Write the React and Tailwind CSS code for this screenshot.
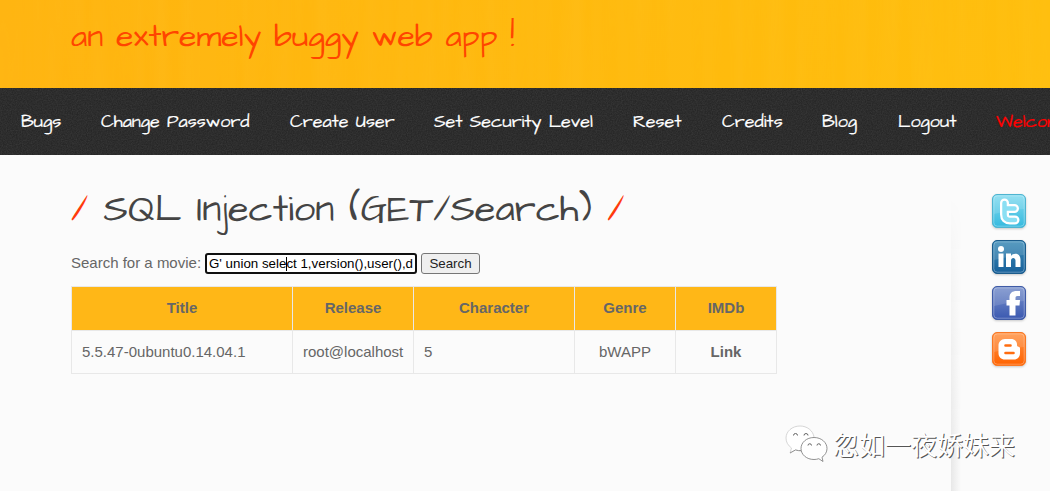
const menu = [
  { label: "Bugs", box: "w-20" },
  { label: "Change Password", box: "w-[189px]" },
  { label: "Create User", box: "w-36" },
  { label: "Set Security Level", box: "w-[199px]" },
  { label: "Reset", box: "w-[89px]" },
  { label: "Credits", box: "w-[100px]" },
  { label: "Blog", box: "w-[76px]" },
  { label: "Logout", box: "w-[98px]" },
];

const movies = [
  {
    title: "5.5.47-0ubuntu0.14.04.1",
    release: "root@localhost",
    character: "5",
    genre: "bWAPP",
  },
];

const hand = "font-['Architects_Daughter','Lato',sans-serif]";

export default function App() {
  return (
    <div className="relative flex h-[491px] w-[1050px] flex-col overflow-hidden bg-[#fbfbfb] font-['Liberation_Sans',Arial,sans-serif] text-[15px] text-[#666]">
      <Header />
      <Menu />
      <div className="flex flex-1">
        <main className="w-[951px] pl-[71px] pt-[28px]">
          <h1
            className={`${hand} h-12 whitespace-pre pt-[3px] text-[38px] font-normal leading-[48px] text-[#444]`}
          >
            <span className="text-[#ff3a0c]">/</span>
            {" SQL Injection (GET/Search) "}
            <span className="text-[#ff3a0c]">/</span>
          </h1>
          <SearchForm />
          <MovieTable />
        </main>
        <Side />
      </div>
      <Watermark />
    </div>
  );
}

function Header() {
  return (
    <header className="relative h-[88px] shrink-0 bg-linear-to-r from-[#ffb40f] to-[#ffbe0c]">
      <Noise id="streaks" freq="0.06 0.003" className="opacity-4" />
      <h2
        className={`${hand} relative whitespace-pre pl-[71px] pt-[15px] text-[32px] font-normal leading-[44px] text-[#ff4500]`}
      >
        an extremely buggy web app !
      </h2>
    </header>
  );
}

function Menu() {
  return (
    <nav className="relative h-[67px] shrink-0 bg-[#272727]">
      <Noise id="grain" freq="0.8" className="opacity-8 grayscale" />
      <ul
        className={`${hand} relative flex h-full items-center whitespace-nowrap pl-[21px] text-[18px] text-white [-webkit-text-stroke:0.2px]`}
      >
        {menu.map((item) => (
          <li key={item.label} className={`${item.box} shrink-0`}>
            <a>{item.label}</a>
          </li>
        ))}
        <li className="shrink-0 text-[#f00]">Welcome Bee</li>
      </ul>
    </nav>
  );
}

// Fine texture laid over the bars
function Noise({ id, freq, className }) {
  return (
    <svg className={`absolute inset-0 h-full w-full ${className}`}>
      <filter id={id} x="0" y="0" width="100%" height="100%">
        <feTurbulence type="fractalNoise" baseFrequency={freq} numOctaves="2" />
        <feColorMatrix values="0 0 0 0 1  0 0 0 0 0.9  0 0 0 0 0.5  1.6 0 0 0 -0.4" />
      </filter>
      <rect width="100%" height="100%" filter={`url(#${id})`} />
    </svg>
  );
}

function SearchForm() {
  return (
    <form className="mt-[22px] flex h-[21px] items-center">
      <label className="w-[134px] whitespace-nowrap">Search for a movie:</label>
      <div className="relative h-[21px] w-[212px] overflow-hidden rounded-[3px] border-2 border-[#101010] bg-white pl-[2px] text-[13.333px] leading-[18px] text-black">
        <span className="whitespace-nowrap">G' union select 1,version(),user(),d</span>
        <span className="absolute left-[79px] top-[2px] h-[14px] w-px bg-black" />
      </div>
      <button
        type="button"
        className="ml-1 h-[21px] w-[59px] rounded-[3px] border border-[#767676] bg-[#efefef] text-[13.333px] leading-[18px] text-[#222]"
      >
        Search
      </button>
    </form>
  );
}

function MovieTable() {
  const cell = "border border-[#e8e8e8] px-[10px]";
  return (
    <table className="mt-3 w-[706px] table-fixed border-collapse">
      <colgroup>
        <col className="w-[221px]" />
        <col className="w-[121px]" />
        <col className="w-[161px]" />
        <col className="w-[101px]" />
        <col className="w-[101px]" />
      </colgroup>
      <thead>
        <tr className="h-11 bg-[#ffb717] font-bold">
          <th className={cell}>Title</th>
          <th className={cell}>Release</th>
          <th className={cell}>Character</th>
          <th className={cell}>Genre</th>
          <th className={cell}>IMDb</th>
        </tr>
      </thead>
      <tbody>
        {movies.map((movie) => (
          <tr key={movie.title} className="h-[43px]">
            <td className={cell}>{movie.title}</td>
            <td className={cell}>{movie.release}</td>
            <td className={cell}>{movie.character}</td>
            <td className={`${cell} text-center`}>{movie.genre}</td>
            <td className={`${cell} text-center font-bold`}>Link</td>
          </tr>
        ))}
      </tbody>
    </table>
  );
}

function Side() {
  return (
    <aside className="relative flex flex-1 flex-col gap-3 pl-[41px] pt-[39px]">
      <div className="absolute bottom-0 left-0 top-10 w-2.5 bg-linear-to-r from-[#e8e8e8] to-[#fbfbfb] mask-t-from-[10%]" />
      <Badge id="tw" top="#86dcf0" bottom="#35b9de" edge="#4fb4d0">
        <path
          d="M12.500 9v11.500q0 5.500 5.500 5.500h5M12.500 14.500h10"
          fill="none"
          stroke="#fff"
          strokeWidth="9"
          strokeLinecap="round"
          strokeLinejoin="round"
        />
        <path
          d="M12.500 9v11.500q0 5.500 5.500 5.500h5M12.500 14.500h10"
          fill="none"
          stroke="#8adff3"
          strokeWidth="4.500"
          strokeLinecap="round"
          strokeLinejoin="round"
        />
      </Badge>
      <Badge id="in" top="#3f8db8" bottom="#17609a" edge="#1b5c8c">
        <g fill="#fff">
          <circle cx="9" cy="9" r="3" />
          <path d="M6.500 13.500h5V27h-5zM14 13.500h5v2.500c2-3.500 9.500-3.600 9.500 3.500V27h-5v-6.500c0-3.500-4.500-3.500-4.500 0V27h-5z" />
        </g>
      </Badge>
      <Badge id="fb" top="#7b93cc" bottom="#3a58b0" edge="#3f5ba6">
        <path
          d="M17.500 29.500V19.500h-3V14h3v-2.500C17.500 7 20.500 5 24.500 5H28v5h-2.500C24 10 23.500 10.700 23.500 12v2H28l-.5 5.500h-4v10z"
          fill="#fff"
        />
      </Badge>
      <Badge id="bl" top="#ff9548" bottom="#ff6200" edge="#f97824">
        <path
          d="M13 7h6c4 0 6 2.500 6 5.500 0 2 .5 2 1.500 2.200s1.500.8 1.500 1.800v4.500c0 4-2.500 6.500-6 6.500h-9c-4 0-6.500-2.500-6.500-6.500v-7.500c0-3.500 2.500-6.500 6.500-6.500z"
          fill="#fff"
        />
        <path
          d="M13.500 13.500h5M13.500 21h8"
          fill="none"
          stroke="#ff6d10"
          strokeWidth="2.600"
          strokeLinecap="round"
        />
      </Badge>
    </aside>
  );
}

function Badge({ id, top, bottom, edge, children }) {
  return (
    <svg className="h-[34px] w-[34px] shrink-0 drop-shadow-[0_1px_1px_rgba(0,0,0,0.2)]" viewBox="0 0 34 34">
      <linearGradient id={id} x2="0" y2="1">
        <stop stopColor={top} />
        <stop offset="1" stopColor={bottom} />
      </linearGradient>
      <rect x=".5" y=".5" width="33" height="33" rx="4.500" fill={`url(#${id})`} stroke={edge} />
      <rect x="1.800" y="1.800" width="30.400" height="30.400" rx="3.500" fill="none" stroke="#fff" strokeOpacity=".3" />
      <path d="M2 5q0-3 3-3h24q3 0 3 3v10Q17 16 2 20z" fill="#fff" opacity=".13" />
      {children}
    </svg>
  );
}

function Watermark() {
  return (
    <div className="absolute left-[785px] top-[422px] flex h-11 items-center">
      <svg className="h-[40px] w-[43px]" viewBox="0 0 43 40" fill="#fff" stroke="#777" strokeWidth=".8">
        <path d="M15 2C7 2 1 7.500 1 14c0 4 2 7.500 5.500 10L5 29l5.500-3c2 .6 4 .8 6 .7L29 13C28 6.500 22 2 15 2z" stroke="#ccc" />
        <path d="M5 29l5.500-3c2 .6 4 .8 6 .7" />
        <path d="M29 13.500c-7.500 0-13 5-13 11s5.500 11 13 11c1.700 0 3.300-.3 4.800-.8L38 37.500l-1-4.300c3-2 5-5 5-8.700 0-6-5.500-11-13-11z" />
        <path d="M8.500 11.500a2 2 0 0 1 4 0M19 11.500a2 2 0 0 1 4 0M23 21.500a1.700 1.700 0 0 1 3.500 0M32 21.500a1.700 1.700 0 0 1 3.500 0" fill="none" stroke="#666" strokeWidth="1" />
      </svg>
      <span className="ml-[5px] whitespace-nowrap font-['Noto_Sans_CJK_SC',sans-serif] text-[26px] font-normal leading-[40px] text-white [text-shadow:1px_1px_0_#555]">
        忽如一夜娇妹来
      </span>
    </div>
  );
}
